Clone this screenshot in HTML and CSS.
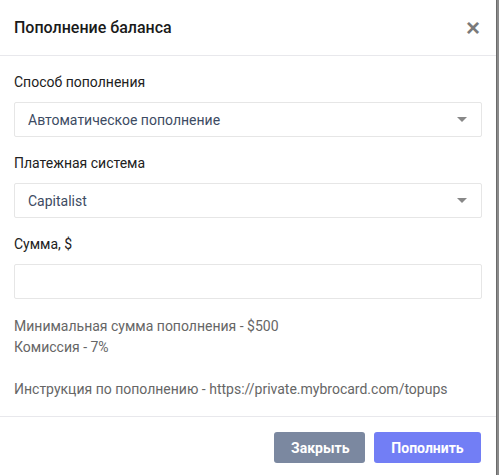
FILE: index.html
```html
<!DOCTYPE html>
<html lang="ru">
<head>
    <meta charset="UTF-8">
    <meta name="viewport" content="width=device-width, initial-scale=1.0">
    <title>Пополнение баланса</title>
    <link rel="stylesheet" href="styles.css">
</head>
<body>
    <div class="modal">
        <div class="modal-header">
            <h4 class="modal-title">Пополнение баланса</h4>
            <button class="close" type="button">&times;</button>
        </div>
        <div class="modal-body">
            <div class="form-group">
                <label for="method">Способ пополнения</label>
                <div class="select-wrap">
                    <select id="method" class="form-control">
                        <option>Автоматическое пополнение</option>
                    </select>
                </div>
            </div>
            <div class="form-group">
                <label for="system">Платежная система</label>
                <div class="select-wrap">
                    <select id="system" class="form-control">
                        <option>Capitalist</option>
                    </select>
                </div>
            </div>
            <div class="form-group">
                <label for="amount">Сумма, $</label>
                <input type="text" id="amount" class="form-control">
            </div>
            <p class="info">
                Минимальная сумма пополнения - $500<br>
                Комиссия - 7%<br>
                <br>
                Инструкция по пополнению - https://private.mybrocard.com/topups
            </p>
        </div>
        <div class="modal-footer">
            <button class="btn btn-secondary" type="button">Закрыть</button>
            <button class="btn btn-primary" type="button">Пополнить</button>
        </div>
    </div>
</body>
</html>
```

FILE: styles.css
```css
body {
    margin: 0;
    background-color: #8a8a8a;
    font-family: Roboto, 'Liberation Sans', sans-serif;
    color: #212121;
}
.modal {
    width: 497px;
    height: 475px;
    background-color: #fff;
    border-right: 1px solid #6b6b6b;
    box-sizing: border-box;
    display: flex;
    flex-direction: column;
}
.modal-header {
    height: 56px;
    display: flex;
    align-items: center;
    justify-content: space-between;
    padding: 0 16px 0 14px;
    border-bottom: 1px solid #e8e8ec;
}
.modal-title {
    margin: 0;
    font-size: 16px;
    font-weight: 500;
    color: #1a1a1a;
}
.close {
    border: none;
    background: none;
    padding: 0;
    font-family: 'Liberation Sans', sans-serif;
    font-size: 24px;
    font-weight: bold;
    line-height: 1;
    color: #7a7a7a;
    cursor: pointer;
}
.modal-body {
    padding: 16px 14px 16px 14px;
    flex: 1;
}
.form-group {
    margin-bottom: 16px;
}
label {
    display: block;
    font-size: 14px;
    line-height: 20px;
    margin-bottom: 10px;
    color: #212121;
}
.form-control {
    display: block;
    width: 468px;
    height: 35px;
    box-sizing: border-box;
    border: 1px solid #e6e6e6;
    border-radius: 2px;
    background-color: #fff;
    padding: 0 13px;
    font-family: Roboto, 'Liberation Sans', sans-serif;
    font-size: 14px;
    color: #3d4b63;
    outline: none;
}
.select-wrap {
    position: relative;
}
select.form-control {
    appearance: none;
    -webkit-appearance: none;
}
.select-wrap::after {
    content: "";
    position: absolute;
    right: 15px;
    top: 15px;
    border-left: 5px solid transparent;
    border-right: 5px solid transparent;
    border-top: 5px solid #888;
    pointer-events: none;
}
.info {
    margin: 0;
    padding-top: 1px;
    font-size: 14px;
    line-height: 21px;
    color: #666;
}
.modal-footer {
    height: 59px;
    border-top: 1px solid #e8e8ec;
    display: flex;
    justify-content: flex-end;
    align-items: flex-start;
    gap: 9px;
    padding: 15px 15px 0 0;
    box-sizing: border-box;
}
.btn {
    height: 31px;
    border: none;
    border-radius: 3px;
    color: #fff;
    font-family: Roboto, 'Liberation Sans', sans-serif;
    font-size: 14px;
    font-weight: bold;
    padding: 0 17px;
    cursor: pointer;
}
.btn-secondary {
    background-color: #7b88a0;
    width: 91px;
}
.btn-primary {
    background-color: #727ef5;
    width: 107px;
}
```
